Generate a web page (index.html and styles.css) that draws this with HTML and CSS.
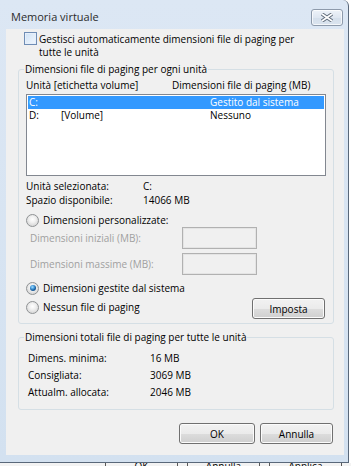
FILE: index.html
```html
<!DOCTYPE html>
<html lang="it">
<head>
    <meta charset="UTF-8">
    <title>Memoria virtuale</title>
    <link rel="stylesheet" href="styles.css">
</head>
<body>
    <div class="window">
        <div class="titlebar">
            <span class="title">Memoria virtuale</span>
            <button class="close" title="Chiudi">
                <svg width="14" height="9" viewBox="0 0 14 9">
                    <path d="M2 1 L12 8 M12 1 L2 8" stroke="#5f6b7a" stroke-width="3.6" fill="none"/>
                    <path d="M2 1 L12 8 M12 1 L2 8" stroke="#ffffff" stroke-width="1.6" fill="none"/>
                </svg>
            </button>
        </div>

        <div class="client">
            <label class="check-row">
                <span class="checkbox"></span>
                <span>Gestisci automaticamente dimensioni file di paging per<br>tutte le unità</span>
            </label>

            <fieldset class="group drives">
                <legend>Dimensioni file di paging per ogni unità</legend>
                <div class="list-head">
                    <span>Unità [etichetta volume]</span>
                    <span>Dimensioni file di paging (MB)</span>
                </div>
                <div class="listbox">
                    <div class="row selected"><span>C:</span><span></span><span>Gestito dal sistema</span></div>
                    <div class="row"><span>D:</span><span>[Volume]</span><span>Nessuno</span></div>
                </div>
                <div class="info">
                    <span>Unità selezionata:</span><span>C:</span>
                    <span>Spazio disponibile:</span><span>14066 MB</span>
                </div>
                <div class="radio-row first"><span class="radio"></span>Dimensioni personalizzate:</div>
                <div class="field"><span>Dimensioni iniziali (MB):</span><span class="input"></span></div>
                <div class="field second"><span>Dimensioni massime (MB):</span><span class="input"></span></div>
                <div class="radio-row system"><span class="radio checked"></span>Dimensioni gestite dal sistema</div>
                <div class="radio-row none">
                    <span class="radio-label"><span class="radio"></span>Nessun file di paging</span>
                    <button class="btn set">Imposta</button>
                </div>
            </fieldset>

            <fieldset class="group totals">
                <legend>Dimensioni totali file di paging per tutte le unità</legend>
                <div class="totals-grid">
                    <span>Dimens. minima:</span><span>16 MB</span>
                    <span>Consigliata:</span><span>3069 MB</span>
                    <span>Attualm. allocata:</span><span>2046 MB</span>
                </div>
            </fieldset>

            <div class="actions">
                <button class="btn ok">OK</button>
                <button class="btn cancel">Annulla</button>
            </div>
        </div>
    </div>

    <!-- bottom of the window behind this dialog -->
    <div class="behind">
        <span class="behind-btn">OK</span>
        <span class="behind-btn">Annulla</span>
        <span class="behind-btn">Applica</span>
    </div>
</body>
</html>
```

FILE: styles.css
```css
body {
    margin: 0;
    background: #ffffff;
    font-family: "Open Sans", "Liberation Sans", sans-serif;
    font-size: 10px;
    color: #000;
}

.window {
    width: 349px;
    height: 463px;
    box-sizing: border-box;
    padding: 0 4px 6px 6px;
    background: linear-gradient(#dce7f4, #d3e1f0);
    border-right: 1px solid #59687a;
    border-bottom: 1px solid #59687a;
    border-top-right-radius: 6px;
    display: flex;
    flex-direction: column;
}

.titlebar {
    height: 29px;
    display: flex;
    justify-content: space-between;
    align-items: flex-start;
}

.title {
    padding: 9px 0 0 5px;
    font-size: 11px;
    line-height: 16px;
    color: #2b2b2b;
}

.close {
    width: 32px;
    height: 17px;
    margin: 9px 1px 0 0;
    padding: 0;
    border: 1px solid #8d9aab;
    border-radius: 3px;
    background: linear-gradient(#eef3f9, #dfe7f1 50%, #d4dfeb 51%, #dbe4ef);
    box-shadow: inset 0 0 0 1px rgba(255, 255, 255, 0.7);
    display: flex;
    align-items: center;
    justify-content: center;
}

.client {
    height: 426px;
    box-sizing: border-box;
    padding: 4px 10px 0 12px;
    background: #f0f0f0;
}

.check-row {
    display: flex;
    align-items: flex-start;
    padding-left: 6px;
    line-height: 13px;
}

.checkbox {
    width: 13px;
    height: 13px;
    box-sizing: border-box;
    margin: -1px 2px 0 0;
    border: 1px solid #6f8db5;
    background: linear-gradient(135deg, #cfe2f6, #f1f7fd);
    box-shadow: inset 0 0 0 1px #e6effa;
    flex-shrink: 0;
}

.group {
    margin: 3px 0 0 0;
    min-width: 0;
    border: 1px solid #d5dfe5;
    border-radius: 3px;
}

.group legend {
    padding: 0 1px;
    line-height: 14px;
}

.drives {
    padding: 2px 7px 4px 7px;
}

.drives legend {
    margin-left: -2px;
}

.list-head {
    display: grid;
    grid-template-columns: 146px 1fr;
    line-height: 14px;
}

.listbox {
    margin-top: 2px;
    height: 82px;
    box-sizing: border-box;
    padding: 1px;
    border: 1px solid #828790;
    background: #fff;
}

.row {
    display: grid;
    grid-template-columns: 32px 149px 1fr;
    padding-left: 1px;
    line-height: 13px;
}

.row.selected {
    background: #3399ff;
    color: #fff;
}

.info {
    margin-top: 3px;
    display: grid;
    grid-template-columns: 117px 1fr;
    line-height: 14px;
}

.radio-row {
    display: flex;
    align-items: center;
    line-height: 14px;
}

.radio-row.first {
    margin-top: 7px;
    line-height: 13px;
}

.radio-row.system {
    margin-top: 6px;
}

.radio-row.none {
    margin-top: 3px;
    justify-content: space-between;
    align-items: flex-start;
}

.radio-label {
    display: flex;
    align-items: center;
    margin-top: 2px;
}

.radio {
    width: 13px;
    height: 13px;
    box-sizing: border-box;
    margin-right: 4px;
    border: 1px solid #8f9294;
    border-radius: 50%;
    background: radial-gradient(circle at 50% 40%, #ffffff 0, #f1f1f1 3px, #dcdcdc 6px);
    position: relative;
    flex-shrink: 0;
}

.radio.checked::after {
    content: "";
    position: absolute;
    left: 2.5px;
    top: 2.5px;
    width: 6px;
    height: 6px;
    border-radius: 50%;
    background: radial-gradient(circle at 40% 35%, #a6e0ff 0, #3d93d6 2px, #1b5c98 3.2px);
}

.field {
    display: grid;
    grid-template-columns: 152px 75px;
    align-items: center;
    padding-left: 4px;
    line-height: 14px;
    color: #a0a0a0;
}

.field.second {
    margin-top: 4px;
}

.input {
    height: 22px;
    box-sizing: border-box;
    border: 1px solid #b1b1b1;
    box-shadow: inset 0 0 0 1px #e4e4e4;
    background: #f0f0f0;
}

.btn {
    height: 21px;
    padding: 0;
    border: 1px solid #707070;
    border-radius: 3px;
    background: linear-gradient(#f2f2f2, #ebebeb 50%, #dddddd 51%, #cfcfcf);
    box-shadow: inset 0 0 0 1px #fbfbfb;
    font-family: inherit;
    font-size: 10px;
    color: #000;
}

.btn.set {
    width: 73px;
    margin-right: 1px;
}

.totals {
    margin-top: 6px;
    padding: 6px 9px 8px 9px;
}

.totals legend {
    margin-left: -4px;
}

.totals-grid {
    display: grid;
    grid-template-columns: 122px 1fr;
    line-height: 17px;
}

.actions {
    margin-top: 13px;
    display: flex;
    justify-content: flex-end;
    gap: 5px;
    padding-right: 1px;
}

.btn.ok {
    width: 76px;
}

.btn.cancel {
    width: 73px;
}

.behind {
    height: 3px;
    overflow: hidden;
    background: #f3f3f3;
    display: flex;
    gap: 9px;
    padding-left: 105px;
}

.behind-btn {
    width: 73px;
    box-sizing: border-box;
    border-left: 1px solid #5a5a5a;
    border-right: 1px solid #5a5a5a;
    text-align: center;
    line-height: 14px;
    margin-top: -4px;
}
```
